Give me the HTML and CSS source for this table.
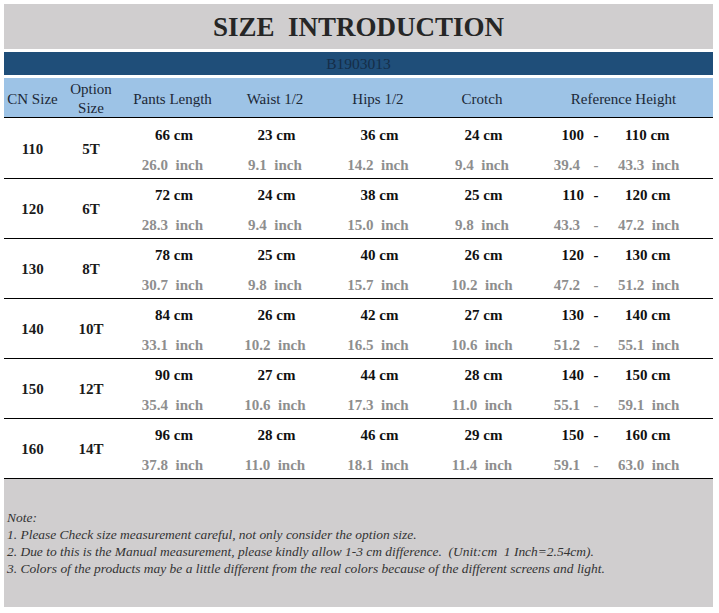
FILE: index.html
```html
<!DOCTYPE html>
<html lang="en">
<head>
<meta charset="utf-8">
<title>Size Introduction</title>
<link rel="stylesheet" href="styles.css">
</head>
<body>
<div class="sheet">
  <div class="title">SIZE&nbsp;&nbsp;INTRODUCTION</div>
  <div class="code">B1903013</div>
  <div class="row head">
    <div class="hcell">CN Size</div>
    <div class="hcell two">Option<br>Size</div>
    <div class="hcell">Pants Length</div>
    <div class="hcell">Waist 1/2</div>
    <div class="hcell">Hips 1/2</div>
    <div class="hcell">Crotch</div>
    <div class="hcell">Reference Height</div>
  </div>

  <div class="row">
    <div class="size">110</div><div class="size">5T</div>
    <div class="m"><span class="cm">66 cm</span><span class="inch">26.0&nbsp;&nbsp;inch</span></div>
    <div class="m"><span class="cm">23 cm</span><span class="inch">9.1&nbsp;&nbsp;inch</span></div>
    <div class="m"><span class="cm">36 cm</span><span class="inch">14.2&nbsp;&nbsp;inch</span></div>
    <div class="m"><span class="cm">24 cm</span><span class="inch">9.4&nbsp;&nbsp;inch</span></div>
    <div class="ref">
      <div class="cm rl"><span class="lo">100</span><span class="dash">-</span><span class="hi">110 cm</span></div>
      <div class="inch rl"><span class="lo">39.4</span><span class="dash">-</span><span class="hi">43.3&nbsp;&nbsp;inch</span></div>
    </div>
  </div>

  <div class="row">
    <div class="size">120</div><div class="size">6T</div>
    <div class="m"><span class="cm">72 cm</span><span class="inch">28.3&nbsp;&nbsp;inch</span></div>
    <div class="m"><span class="cm">24 cm</span><span class="inch">9.4&nbsp;&nbsp;inch</span></div>
    <div class="m"><span class="cm">38 cm</span><span class="inch">15.0&nbsp;&nbsp;inch</span></div>
    <div class="m"><span class="cm">25 cm</span><span class="inch">9.8&nbsp;&nbsp;inch</span></div>
    <div class="ref">
      <div class="cm rl"><span class="lo">110</span><span class="dash">-</span><span class="hi">120 cm</span></div>
      <div class="inch rl"><span class="lo">43.3</span><span class="dash">-</span><span class="hi">47.2&nbsp;&nbsp;inch</span></div>
    </div>
  </div>

  <div class="row">
    <div class="size">130</div><div class="size">8T</div>
    <div class="m"><span class="cm">78 cm</span><span class="inch">30.7&nbsp;&nbsp;inch</span></div>
    <div class="m"><span class="cm">25 cm</span><span class="inch">9.8&nbsp;&nbsp;inch</span></div>
    <div class="m"><span class="cm">40 cm</span><span class="inch">15.7&nbsp;&nbsp;inch</span></div>
    <div class="m"><span class="cm">26 cm</span><span class="inch">10.2&nbsp;&nbsp;inch</span></div>
    <div class="ref">
      <div class="cm rl"><span class="lo">120</span><span class="dash">-</span><span class="hi">130 cm</span></div>
      <div class="inch rl"><span class="lo">47.2</span><span class="dash">-</span><span class="hi">51.2&nbsp;&nbsp;inch</span></div>
    </div>
  </div>

  <div class="row">
    <div class="size">140</div><div class="size">10T</div>
    <div class="m"><span class="cm">84 cm</span><span class="inch">33.1&nbsp;&nbsp;inch</span></div>
    <div class="m"><span class="cm">26 cm</span><span class="inch">10.2&nbsp;&nbsp;inch</span></div>
    <div class="m"><span class="cm">42 cm</span><span class="inch">16.5&nbsp;&nbsp;inch</span></div>
    <div class="m"><span class="cm">27 cm</span><span class="inch">10.6&nbsp;&nbsp;inch</span></div>
    <div class="ref">
      <div class="cm rl"><span class="lo">130</span><span class="dash">-</span><span class="hi">140 cm</span></div>
      <div class="inch rl"><span class="lo">51.2</span><span class="dash">-</span><span class="hi">55.1&nbsp;&nbsp;inch</span></div>
    </div>
  </div>

  <div class="row">
    <div class="size">150</div><div class="size">12T</div>
    <div class="m"><span class="cm">90 cm</span><span class="inch">35.4&nbsp;&nbsp;inch</span></div>
    <div class="m"><span class="cm">27 cm</span><span class="inch">10.6&nbsp;&nbsp;inch</span></div>
    <div class="m"><span class="cm">44 cm</span><span class="inch">17.3&nbsp;&nbsp;inch</span></div>
    <div class="m"><span class="cm">28 cm</span><span class="inch">11.0&nbsp;&nbsp;inch</span></div>
    <div class="ref">
      <div class="cm rl"><span class="lo">140</span><span class="dash">-</span><span class="hi">150 cm</span></div>
      <div class="inch rl"><span class="lo">55.1</span><span class="dash">-</span><span class="hi">59.1&nbsp;&nbsp;inch</span></div>
    </div>
  </div>

  <div class="row">
    <div class="size">160</div><div class="size">14T</div>
    <div class="m"><span class="cm">96 cm</span><span class="inch">37.8&nbsp;&nbsp;inch</span></div>
    <div class="m"><span class="cm">28 cm</span><span class="inch">11.0&nbsp;&nbsp;inch</span></div>
    <div class="m"><span class="cm">46 cm</span><span class="inch">18.1&nbsp;&nbsp;inch</span></div>
    <div class="m"><span class="cm">29 cm</span><span class="inch">11.4&nbsp;&nbsp;inch</span></div>
    <div class="ref">
      <div class="cm rl"><span class="lo">150</span><span class="dash">-</span><span class="hi">160 cm</span></div>
      <div class="inch rl"><span class="lo">59.1</span><span class="dash">-</span><span class="hi">63.0&nbsp;&nbsp;inch</span></div>
    </div>
  </div>

  <div class="notes">
    <p>Note:</p>
    <p>1. Please Check size measurement careful, not only consider the option size.</p>
    <p>2. Due to this is the Manual measurement, please kindly allow 1-3 cm difference.&nbsp; (Unit:cm&nbsp; 1 Inch=2.54cm).</p>
    <p>3. Colors of the products may be a little different from the real colors because of the different screens and light.</p>
  </div>
</div>
</body>
</html>
```

FILE: styles.css
```css
* { box-sizing: border-box; }
html, body { margin: 0; padding: 0; background: #ffffff; }
body {
  font-family: "Liberation Serif", "Times New Roman", serif;
  color: #111111;
}
.sheet {
  width: 709px;
  margin: 4px 0 0 4px;
}
.title {
  height: 45px;
  background: #d0cecf;
  color: #262626;
  font-weight: bold;
  font-size: 27px;
  line-height: 47px;
  text-align: center;
}
.code {
  margin-top: 3px;
  height: 23px;
  background: #1f4e79;
  color: #152d48;
  font-size: 15.5px;
  line-height: 24px;
  text-align: center;
}
.row {
  display: grid;
  grid-template-columns: 57px 60px 103px 102px 104px 104px 179px;
  height: 60px;
  border-bottom: 1px solid #000000;
}
.row.head {
  margin-top: 3px;
  height: 40px;
  background: #9dc3e6;
}
.head + .row { height: 61px; padding-top: 1px; }
.hcell {
  display: flex;
  align-items: center;
  justify-content: center;
  text-align: center;
  font-size: 15px;
  color: #1c2836;
  padding-top: 2px;
}
.hcell.two { line-height: 19px; }
.size {
  display: flex;
  align-items: center;
  justify-content: center;
  font-weight: bold;
  font-size: 15px;
  color: #1a1a1a;
}
.m, .ref {
  display: flex;
  flex-direction: column;
  align-items: center;
  padding-top: 1px;
  font-weight: bold;
  font-size: 15px;
}
.cm, .inch {
  display: block;
  line-height: 30px;
  white-space: nowrap;
}
.cm { color: #111111; }
.inch { color: #8e8e8e; }
.m .cm { padding-left: 3px; }
.ref { align-items: stretch; }
.rl {
  display: grid;
  grid-template-columns: 50px 24px 1fr;
}
.rl .lo { text-align: right; }
.rl .dash { text-align: center; }
.rl .hi { text-align: left; }
.cm.rl .hi { padding-left: 17px; }
.inch.rl .lo { padding-right: 4px; }
.inch.rl .hi { padding-left: 10px; }
.notes {
  height: 128px;
  background: #d0cecf;
  padding: 30px 0 0 3px;
  font-style: italic;
  font-size: 13.45px;
  line-height: 17px;
  color: #333333;
}
.notes p { margin: 0; white-space: nowrap; }
```
